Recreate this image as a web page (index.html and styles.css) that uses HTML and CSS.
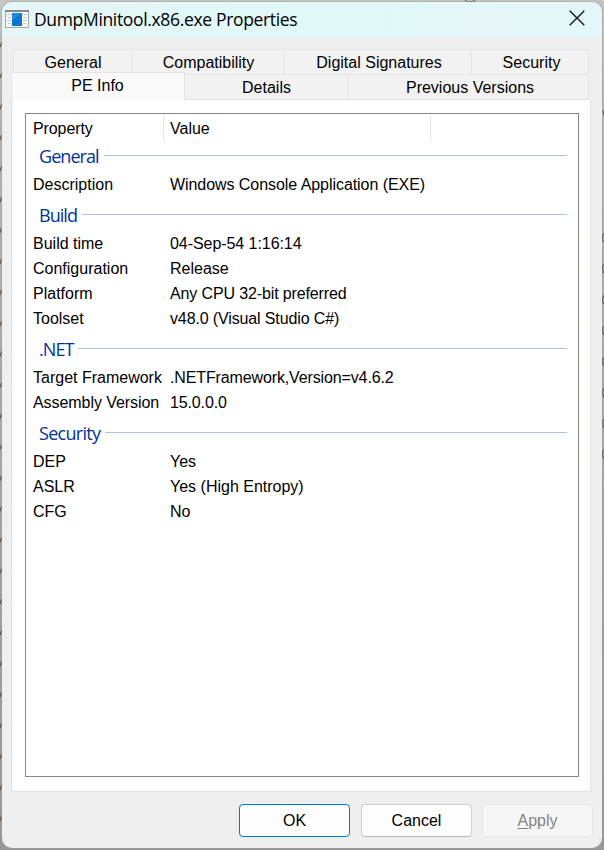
FILE: index.html
```html
<!DOCTYPE html>
<html lang="en">
<head>
<meta charset="utf-8">
<title>DumpMinitool.x86.exe Properties</title>
<link rel="stylesheet" href="styles.css">
</head>
<body>
<svg class="backdrop" width="604" height="850" aria-hidden="true">
  <defs>
    <linearGradient id="shade" x1="0" y1="0" x2="0" y2="1"><stop offset="0" stop-color="#c4c4c4"/><stop offset=".15" stop-color="#b4b4b4"/><stop offset="1" stop-color="#989898"/></linearGradient>
    <pattern id="marks" width="2" height="30.95" patternUnits="userSpaceOnUse" y="42"><path d="M0 5L2 0" stroke="#5c4630" stroke-width="1.2" fill="none"/></pattern>
    <pattern id="rounds" width="2" height="30.95" patternUnits="userSpaceOnUse" x="602" y="233"><path d="M2 1Q.6 1 .6 4.500T2 9" stroke="#35485c" stroke-width="1.1" fill="none"/></pattern>
  </defs>
  <rect width="604" height="850" fill="url(#shade)"/>
  <rect y="42" width="2" height="790" fill="url(#marks)"/>
  <rect x="602" y="233" width="2" height="232" fill="url(#rounds)"/>
  <path d="M603 110l1 5M465 0q5 4 10 0" stroke="#555" fill="none"/>
</svg>
<main class="window">
  <header class="titlebar">
    <svg class="app-icon" width="24" height="18" viewBox="0 0 24 18"><rect x=".5" y=".5" width="23" height="17" fill="#f8f8f8" stroke="#a6a6a8"/><path d="M0 1h24" stroke="#88888c" stroke-width="2"/><rect x="7" y="3" width="10" height="13" fill="#1b8bdc"/><path d="M7 16V10L17 3V16z" fill="#0878ce"/><path d="M2 4.500h4M3 7.500h3M2 10.500h4M3 13.500h3M18 4.500h4M18 7.500h3M18 10.500h4M18 13.500h3" stroke="#c5c5c8"/></svg>
    <h1>DumpMinitool.x86.exe Properties</h1>
    <svg class="close" width="16" height="16" viewBox="0 0 16 16"><path d="M.7.7l14.600 14.600M15.300.7L.7 15.300" stroke="#16191b" stroke-width="1.400"/></svg>
  </header>
  <nav class="tabs">
    <div class="tab-row first"><span>General</span><span>Compatibility</span><span>Digital Signatures</span><span>Security</span></div>
    <div class="tab-row second"><span class="active">PE Info</span><span>Details</span><span>Previous Versions</span></div>
  </nav>
  <section class="panel">
    <div class="list">
      <div class="row head"><span>Property</span><span>Value</span><i></i></div>
      <h2>General</h2>
      <div class="row"><span>Description</span><span class="snug">Windows Console Application (EXE)</span></div>
      <h2>Build</h2>
      <div class="row"><span>Build time</span><span class="snug">04-Sep-54 1:16:14</span></div>
      <div class="row"><span>Configuration</span><span>Release</span></div>
      <div class="row"><span>Platform</span><span class="tight">Any CPU 32-bit preferred</span></div>
      <div class="row"><span>Toolset</span><span class="tight">v48.0 (Visual Studio C#)</span></div>
      <h2>.NET</h2>
      <div class="row"><span>Target Framework</span><span class="tight">.NETFramework,Version=v4.6.2</span></div>
      <div class="row"><span class="snug">Assembly Version</span><span class="tight">15.0.0.0</span></div>
      <h2 class="wide">Security</h2>
      <div class="row"><span>DEP</span><span>Yes</span></div>
      <div class="row"><span>ASLR</span><span>Yes (High Entropy)</span></div>
      <div class="row"><span>CFG</span><span>No</span></div>
    </div>
  </section>
  <footer class="actions"><button class="default">OK</button><button>Cancel</button><button disabled><u>A</u>pply</button></footer>
</main>
</body>
</html>
```
FILE: styles.css
```css
* { box-sizing: border-box; }
body { margin: 0; width: 604px; height: 850px; overflow: hidden; padding: 2px; font: 16px/25px "Liberation Sans", Arial, sans-serif; color: #000; }
.backdrop { position: absolute; inset: 0; z-index: -1; }
.window { width: 600px; height: 846px; border-radius: 10px; background: #efefef; overflow: hidden; display: flex; flex-direction: column; box-shadow: 0 0 0 1px rgba(150, 150, 150, .4); }
.titlebar { height: 35px; flex: none; display: flex; align-items: center; padding: 0 17px 2px 3px; background: linear-gradient(90deg, #e3f7f6, #e2f8f8 65%, #e6f6f9 80%, #e3f7f8); }
.close { margin-top: -1px; }
h1 { margin: 0 auto 0 5px; font: 17.5px/32px "Open Sans", sans-serif; letter-spacing: -.34px; white-space: nowrap; }
.tabs { padding: 12px 0 0 11px; flex: none; width: 587px; }
.tab-row { display: grid; height: 25px; }
.first { grid-template-columns: 120px 152px 187px 117px; }
.second { grid-template-columns: 172px 164px 240px; }
.tab-row span { border: 1px solid #e4e4e4; border-width: 1px 1px 0 0; background: #f2f2f2; text-align: center; line-height: 25px; }
.tab-row span:first-child { border-left-width: 1px; }
.first span:last-child { padding-left: 3px; }
.first span:nth-child(3) { padding-left: 2px; }
.second span:last-child { padding-left: 3px; }
.tab-row .active { margin: -2px 0 0 -2px; background: #f9f9f9; height: 28px; z-index: 1; line-height: 26px; padding-right: 1px; }
.panel { margin: 0 11px 0 9px; height: 693px; flex: none; border: 1px solid #e2e2e2; background: #fff; padding: 13px 11px 14px 13px; box-shadow: inset 2px -2px #f9f9f9; }
.list { height: 664px; border: 1px solid #828790; background: #fff; }
.row { height: 25px; display: grid; grid-template-columns: 137px 1fr; padding-left: 7px; white-space: nowrap; }
.snug { letter-spacing: -.06px; }
.tight { letter-spacing: -.13px; }
.head { height: 24px; line-height: 29px; grid-template-columns: 137px 260px 1fr; }
.head span:first-child { letter-spacing: -.1px; }
.head span:nth-child(2), .head i { position: relative; }
.head span:nth-child(2)::before, .head i::before { content: ""; position: absolute; left: -7px; top: 1px; width: 1px; height: 26px; background: #e5e5e5; }
.head i::before { left: 0; }
h2 { margin: 0 11px 0 13px; height: 34px; display: flex; align-items: flex-start; gap: 5px; font: 18px/37px "Open Sans", sans-serif; letter-spacing: -.95px; color: #003399; }
h2.wide { letter-spacing: -.7px; }
h2::after { content: ""; height: 1px; flex: 1; margin-top: 17px; background: #b0c1e0; }
.actions { display: flex; justify-content: flex-end; gap: 11px; padding: 12px 9px 0 0; }
button { width: 111px; height: 33px; border: 1px solid #d0d0d0; border-bottom-color: #bababa; border-radius: 4px; background: #fdfdfd; font: inherit; color: #000; padding: 0; line-height: 31px; }
button.default { border-color: #0078d4; }
button:disabled { margin-left: -1px; background: #f6f6f6; border-color: #e6e6e6; color: #838383; }
u { text-underline-offset: 2px; text-decoration-thickness: 1px; }
```
